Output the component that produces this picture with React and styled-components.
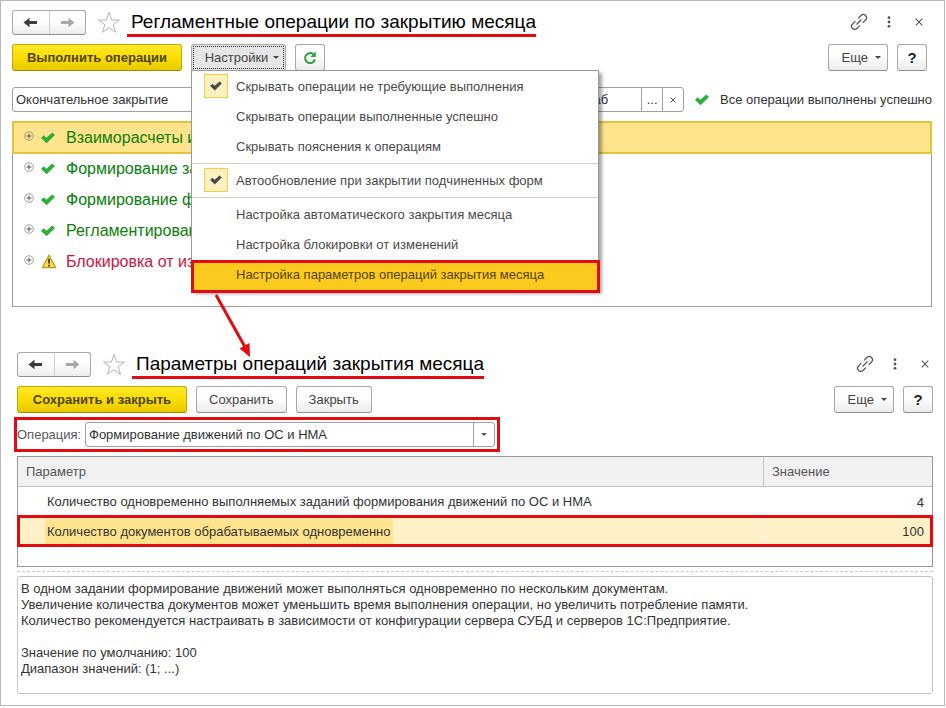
import React, { useState } from "react";
import styled, { createGlobalStyle, css } from "styled-components";

const GlobalStyle = createGlobalStyle`
  *, *::before, *::after { box-sizing: border-box; }
  body { margin: 0; background: #fff; }
  body, button, input, select, textarea {
    font-family: "Liberation Sans", Arial, sans-serif;
    font-size: 13px;
    color: #333;
  }
`;

const RED = "#e30b0f";

const Frame = styled.div`
  margin: 0 1px 1px 0;
  border: 1px solid #b9b9b9;
  padding: 9px 12px 11px 11px;
`;

const Form = styled.section`
  display: flex;
  flex-direction: column;
  ${(p) => p.$second && css`margin: 45px -1px 0 5px;`}
`;

const FormHead = styled.div`
  padding-right: ${(p) => p.$inset || 0}px;
`;

const TitleBar = styled.header`
  display: flex;
  align-items: flex-start;
  height: 34px;
`;

const NavGroup = styled.div`
  display: flex;
  width: 74px;
  height: 25px;
  border: 1px solid #a9a9a9;
  border-bottom-color: #8f8f8f;
  border-radius: 3px;
  background: linear-gradient(#fff 40%, #ededed);
`;

const NavButton = styled.button`
  flex: 1;
  display: grid;
  place-items: center;
  padding: 0;
  border: 0;
  background: none;
  color: ${(p) => (p.$dim ? "#a8a8a8" : "#3c3c3c")};
  & + & { border-left: 1px solid #cfcfcf; }
`;

const IconButton = styled.button`
  display: grid;
  place-items: center;
  place-content: center;
  width: ${(p) => p.$width || 24}px;
  height: 24px;
  padding: 0;
  border: 0;
  background: none;
  color: #555;
`;

const StarButton = styled(IconButton)`
  margin: 0 6px 0 11px;
  color: #b4b4b4;
`;

const Title = styled.h1`
  margin: 0;
  padding: 0 0 0 4px;
  border-bottom: 3px solid ${RED};
  font-size: 19px;
  font-weight: 400;
  line-height: 24px;
  color: #000;
  white-space: nowrap;
`;

const TitleTools = styled.div`
  display: flex;
  gap: 14px;
  margin-left: auto;
`;

const CommandBar = styled.div`
  display: flex;
  gap: 9px;
  height: 27px;
`;

const Button = styled.button`
  display: flex;
  align-items: center;
  justify-content: center;
  gap: 7px;
  height: 27px;
  padding: 0 12px;
  border: 1px solid #a9a9a9;
  border-bottom-color: #8f8f8f;
  border-radius: 3px;
  background: linear-gradient(#fff 40%, #ebebeb);
  color: #444;
  white-space: nowrap;
`;

const PrimaryButton = styled(Button)`
  min-width: 170px;
  border-color: #c4a900;
  border-bottom-color: #a08a00;
  background: linear-gradient(#ffe92c, #fbdd00 50%, #e8c900);
  color: #4d4400;
  font-weight: 700;
`;

const MoreButton = styled(Button)`
  padding: 0 6px 0 13px;
`;

const MenuTrigger = styled(Button)`
  width: 95px;
  padding: 0 5px 0 12px;
  gap: 5px;
  background: #e6e6e6;
  outline: 1px dotted #222;
  outline-offset: -3px;
`;

const SquareButton = styled(Button)`
  width: 30px;
  padding: 0;
`;

const HelpButton = styled(SquareButton)`
  color: #222;
  font-size: 15px;
  font-weight: 700;
`;

const Spacer = styled.div`
  flex: 1;
`;

const Caret = styled.span`
  border: 3px solid transparent;
  border-top-color: currentColor;
  border-bottom: 0;
`;

const MenuAnchor = styled.div`
  position: relative;
`;

const Menu = styled.div`
  position: absolute;
  z-index: 2;
  top: 26px;
  left: 0;
  width: 408px;
  border: 1px solid #989898;
  background: #fff;
  box-shadow: 3px 3px 3px rgba(0, 0, 0, 0.35);
`;

const menuRow = css`
  display: grid;
  grid-template-columns: 24px 1fr;
  align-items: center;
  column-gap: 8px;
  width: 100%;
  height: 30px;
  padding: 0 12px;
  border: 0;
  background: none;
  color: #4a4a4a;
  text-align: left;
  white-space: nowrap;
`;

const CheckItem = styled.label`
  ${menuRow}
  input, svg { grid-area: 1 / 1; }
  svg { justify-self: center; pointer-events: none; visibility: hidden; color: #4a4a4a; z-index: 1; }
  input:checked + svg { visibility: visible; }
`;

const CheckInput = styled.input`
  appearance: none;
  width: 24px;
  height: 24px;
  margin: 0;
  &:checked {
    border: 1px solid #efcf4c;
    background: #fff0c0;
  }
`;

const MenuItem = styled.button`
  ${menuRow}
  span { grid-column: 2; }
  ${(p) => p.$current && css`
    width: calc(100% + 3px);
    height: 33px;
    margin: 1px 0 -3px -1px;
    padding: 0 10px 4px;
    border: 3px solid ${RED};
    background: #fbca1e;
    color: #574300;
  `}
`;

const Separator = styled.hr`
  margin: 2px 0 1px;
  border: 0;
  border-top: 1px solid #d5d0c3;
`;

const Arrow = styled.svg`
  position: absolute;
  z-index: 3;
  top: 249px;
  left: 20px;
  pointer-events: none;
`;

const FieldRow = styled.div`
  display: flex;
  align-items: center;
  margin: 16px 0 9px;
`;

const PeriodInput = styled.input`
  width: 230px;
  height: 25px;
  padding: 0 3px;
  border: 1px solid #a0a0a0;
  border-radius: 3px;
  background: #fff;
`;

const OrgField = styled.div`
  flex: 1;
  display: flex;
  height: 25px;
  margin: 0 11px 0 60px;
  border: 1px solid #a0a0a0;
  border-radius: 3px;
`;

const OrgInput = styled.input`
  flex: 1;
  min-width: 0;
  padding: 0 33px 0 3px;
  border: 0;
  background: none;
  text-align: right;
`;

const FieldButton = styled.button`
  width: 21px;
  padding: 0;
  border: 0;
  border-left: 1px solid #a0a0a0;
  background: none;
  display: grid;
  place-items: center;
`;

const Status = styled.div`
  display: flex;
  align-items: center;
  gap: 11px;
  white-space: nowrap;
`;

const Operations = styled.ul`
  min-height: 186px;
  margin: 0;
  padding: 0;
  border: 1px solid #a0a0a0;
  list-style: none;
`;

const Operation = styled.li`
  display: grid;
  grid-template-columns: 12px 16px 1fr;
  column-gap: 6px;
  align-items: center;
  height: 31px;
  padding-left: 10px;
  color: ${(p) => (p.$warning ? "#cf1540" : "#0a800a")};
  font-size: 16px;
  ${(p) => p.$selected && css`
    height: 33px;
    margin: -1px;
    padding-left: 9px;
    border: 2px solid #e3c23c;
    background: #ffe48d;
  `}
  & > span { padding-left: 3px; }
`;

const Expander = styled.button`
  display: grid;
  place-items: center;
  width: 12px;
  height: 14px;
  margin-bottom: 4px;
  padding: 0;
  border: 0;
  background: none;
  color: #8a8a8a;
`;

const OperationPicker = styled.div`
  display: flex;
  align-items: center;
  align-self: flex-start;
  width: 486px;
  height: 35px;
  margin: 4px 0 4px -3px;
  border: 3px solid ${RED};
  color: #595959;
`;

const PickerLabel = styled.label`
  width: 68px;
  white-space: nowrap;
`;

const SelectBox = styled.div`
  flex: 1;
  display: grid;
  grid-template-columns: 1fr 21px;
  align-items: center;
  height: 25px;
  margin-right: 2px;
  border: 1px solid #a0a0a0;
  border-radius: 3px;
`;

const Select = styled.select`
  grid-area: 1 / 1 / 2 / 3;
  height: 23px;
  padding: 0 3px;
  border: 0;
  background: none;
  appearance: none;
`;

const SelectCaret = styled.span`
  grid-area: 1 / 2;
  display: grid;
  place-items: center;
  height: 23px;
  border-left: 1px solid #a0a0a0;
  pointer-events: none;
`;

const TableBox = styled.div`
  min-height: 111px;
  border: 1px solid #999;
`;

const Table = styled.table`
  width: 100%;
  table-layout: fixed;
  border-collapse: separate;
  border-spacing: 0;
`;

const HeadCell = styled.th`
  width: ${(p) => p.$width || "auto"};
  height: 30px;
  padding: 0 8px;
  border-bottom: 1px solid #c4c4c4;
  background: #f1f1f1;
  color: #555;
  font-weight: 400;
  text-align: left;
  & + & { border-left: 1px solid #c4c4c4; }
`;

const Row = styled.tr`
  height: ${(p) => (p.$selected ? 30 : 29)}px;
  ${(p) => p.$selected && css`
    background: #fff0c5;
    outline: 3px solid ${RED};
    outline-offset: -2px;
    td + td { border-left: 1px solid #fffaf0; }
  `}
`;

const NameCell = styled.td`
  padding: 1px 0 0 27px;
  mark {
    display: block;
    width: fit-content;
    padding: 0 2px;
    line-height: 26px;
    color: inherit;
    background: ${(p) => (p.$selected ? "#ffe48d" : "none")};
  }
`;

const ValueCell = styled.td`
  padding: 1px 8px 0;
  text-align: right;
`;

const Splitter = styled.div`
  height: 5px;
  margin-bottom: 4px;
  border-bottom: 1px dashed #c9c9c9;
`;

const Description = styled.textarea`
  height: 118px;
  padding: 4px 3px 0;
  border: 1px solid #c6c6c6;
  border-radius: 3px;
  line-height: 16px;
  resize: none;
  overflow: hidden;
`;

const ArrowIcon = ({ flip }) => (
  <svg width="15" height="11" viewBox="0 0 15 11" aria-hidden="true">
    <path
      d={flip ? "M14.500 5.500 8.500.7V4H1v3h7.500v3.300z" : "M.5 5.500 6.500.7V4H14v3H6.500v3.300z"}
      fill="currentColor"
    />
  </svg>
);

const StarIcon = () => (
  <svg width="24" height="23" viewBox="0 0 24 23" fill="none" stroke="currentColor" aria-hidden="true">
    <path d="M12 1.500 14.600 9H22.500L16.200 13.700 18.500 21.300 12 16.700 5.500 21.300 7.800 13.700 1.500 9H9.400Z" />
  </svg>
);

const LinkIcon = () => (
  <svg width="20" height="20" viewBox="0 0 20 20" fill="none" stroke="currentColor" strokeWidth="1.2" aria-hidden="true">
    <g transform="rotate(-45 10 10)">
      <path d="M8 13.200H4a3.200 3.200 0 0 1 0-6.400H8M12 6.800H16a3.200 3.200 0 0 1 0 6.400H12M6.500 10H13.500" />
    </g>
  </svg>
);

const DotsIcon = () => (
  <svg width="4" height="12" viewBox="0 0 4 12" fill="currentColor" aria-hidden="true">
    <circle cx="2" cy="1.700" r="1.400" />
    <circle cx="2" cy="6" r="1.400" />
    <circle cx="2" cy="10.300" r="1.400" />
  </svg>
);

const CrossIcon = ({ size = 8 }) => (
  <svg width={size} height={size} viewBox="0 0 8 8" stroke="currentColor" strokeWidth="1.100" aria-hidden="true">
    <path d="M.7.7 7.300 7.300M7.300.7.7 7.300" />
  </svg>
);

const RefreshIcon = () => (
  <svg width="14" height="14" viewBox="0 0 14 14" fill="none" aria-hidden="true">
    <path d="M11.900 8.300A5 5 0 1 1 10.200 3.200" stroke="#2fa23a" strokeWidth="2" />
    <path d="M12.800.6V6H7.400Z" fill="#2fa23a" />
  </svg>
);

const TickIcon = ({ width = 14, height = 12, color = "currentColor" }) => (
  <svg width={width} height={height} viewBox="0 0 14 12" aria-hidden="true">
    <path d="M0 6 2.700 3.300 5.400 5.800 11.300.5 14 3 5.600 11.300Z" fill={color} />
  </svg>
);

const PlusIcon = () => (
  <svg width="10" height="10" viewBox="0 0 10 10" fill="none" stroke="currentColor" aria-hidden="true">
    <circle cx="5" cy="5" r="4.300" strokeWidth=".8" />
    <path d="M2.500 5h5M5 2.500v5" stroke="#555" />
  </svg>
);

const WarningIcon = () => (
  <svg width="16" height="15" viewBox="0 0 16 15" aria-hidden="true">
    <path d="M8 1.200 14.800 13.700H1.200Z" fill="#f6dc3f" stroke="#b99c2b" strokeWidth="1.300" strokeLinejoin="round" />
    <path d="M8 4.800V9.400M8 10.700V12.400" stroke="#3d3522" strokeWidth="1.700" />
  </svg>
);

function FormTitle({ title }) {
  return (
    <TitleBar>
      <NavGroup>
        <NavButton aria-label="Назад"><ArrowIcon /></NavButton>
        <NavButton aria-label="Вперед" $dim><ArrowIcon flip /></NavButton>
      </NavGroup>
      <StarButton aria-label="В избранное"><StarIcon /></StarButton>
      <Title>{title}</Title>
      <TitleTools>
        <IconButton $width={16} aria-label="Ссылка"><LinkIcon /></IconButton>
        <IconButton $width={16} aria-label="Меню"><DotsIcon /></IconButton>
        <IconButton $width={16} aria-label="Закрыть окно"><CrossIcon /></IconButton>
      </TitleTools>
    </TitleBar>
  );
}

function MoreButtons() {
  return (
    <>
      <Spacer />
      <MoreButton>Еще <Caret /></MoreButton>
      <HelpButton aria-label="Справка">?</HelpButton>
    </>
  );
}

function CheckMenuItem({ text, initial = false }) {
  const [on, setOn] = useState(initial);
  return (
    <CheckItem>
      <CheckInput type="checkbox" checked={on} onChange={() => setOn(!on)} />
      <TickIcon width={12} height={10} />
      <span>{text}</span>
    </CheckItem>
  );
}

const operations = [
  { text: "Взаиморасчеты и", selected: true },
  { text: "Формирование за" },
  { text: "Формирование ф" },
  { text: "Регламентирован" },
  { text: "Блокировка от из", warning: true },
];

const parameters = [
  { name: "Количество одновременно выполняемых заданий формирования движений по ОС и НМА", value: 4 },
  { name: "Количество документов обрабатываемых одновременно", value: 100, selected: true },
];

const description = `В одном задании формирование движений может выполняться одновременно по нескольким документам.
Увеличение количества документов может уменьшить время выполнения операции, но увеличить потребление памяти.
Количество рекомендуется настраивать в зависимости от конфигурации сервера СУБД и серверов 1С:Предприятие.

Значение по умолчанию: 100
Диапазон значений: (1; ...)`;

export default function App() {
  return (
    <>
      <GlobalStyle />
      <Frame>
        <Form>
          <FormHead $inset={5}>
            <FormTitle title="Регламентные операции по закрытию месяца" />
            <CommandBar>
              <PrimaryButton>Выполнить операции</PrimaryButton>
              <MenuAnchor>
                <MenuTrigger aria-expanded="true">Настройки <Caret /></MenuTrigger>
                <Menu>
                  <CheckMenuItem text="Скрывать операции не требующие выполнения" initial />
                  <CheckMenuItem text="Скрывать операции выполненные успешно" />
                  <CheckMenuItem text="Скрывать пояснения к операциям" />
                  <Separator />
                  <CheckMenuItem text="Автообновление при закрытии подчиненных форм" initial />
                  <Separator />
                  <MenuItem><span>Настройка автоматического закрытия месяца</span></MenuItem>
                  <MenuItem><span>Настройка блокировки от изменений</span></MenuItem>
                  <MenuItem $current><span>Настройка параметров операций закрытия месяца</span></MenuItem>
                </Menu>
                <Arrow width="44" height="66" viewBox="0 0 44 66" aria-hidden="true">
                  <path d="M5 2 34 54" stroke={RED} strokeWidth="3" />
                  <path d="M39 64 28.500 55.500 38.500 50Z" fill={RED} />
                </Arrow>
              </MenuAnchor>
              <SquareButton aria-label="Обновить"><RefreshIcon /></SquareButton>
              <MoreButtons />
            </CommandBar>
          </FormHead>
          <FieldRow>
            <PeriodInput aria-label="Вид закрытия" defaultValue="Окончательное закрытие" />
            <OrgField>
              <OrgInput aria-label="Организация" defaultValue="раб" />
              <FieldButton aria-label="Выбрать">...</FieldButton>
              <FieldButton aria-label="Очистить"><CrossIcon size={6} /></FieldButton>
            </OrgField>
            <Status>
              <TickIcon color="#2fae3c" />
              Все операции выполнены успешно
            </Status>
          </FieldRow>
          <Operations>
            {operations.map((op) => (
              <Operation key={op.text} $selected={op.selected} $warning={op.warning}>
                <Expander aria-label="Развернуть"><PlusIcon /></Expander>
                {op.warning ? <WarningIcon /> : <TickIcon color="#2fae3c" />}
                <span>{op.text}</span>
              </Operation>
            ))}
          </Operations>
        </Form>

        <Form $second>
          <FormHead>
            <FormTitle title="Параметры операций закрытия месяца" />
            <CommandBar>
              <PrimaryButton>Сохранить и закрыть</PrimaryButton>
              <Button>Сохранить</Button>
              <Button>Закрыть</Button>
              <MoreButtons />
            </CommandBar>
          </FormHead>
          <OperationPicker>
            <PickerLabel htmlFor="operation">Операция:</PickerLabel>
            <SelectBox>
              <Select id="operation">
                <option>Формирование движений по ОС и НМА</option>
              </Select>
              <SelectCaret><Caret /></SelectCaret>
            </SelectBox>
          </OperationPicker>
          <TableBox>
            <Table>
              <thead>
                <tr>
                  <HeadCell>Параметр</HeadCell>
                  <HeadCell $width="169px">Значение</HeadCell>
                </tr>
              </thead>
              <tbody>
                {parameters.map((p) => (
                  <Row key={p.name} $selected={p.selected}>
                    <NameCell $selected={p.selected}><mark>{p.name}</mark></NameCell>
                    <ValueCell>{p.value}</ValueCell>
                  </Row>
                ))}
              </tbody>
            </Table>
          </TableBox>
          <Splitter />
          <Description aria-label="Описание параметра" readOnly value={description} />
        </Form>
      </Frame>
    </>
  );
}
